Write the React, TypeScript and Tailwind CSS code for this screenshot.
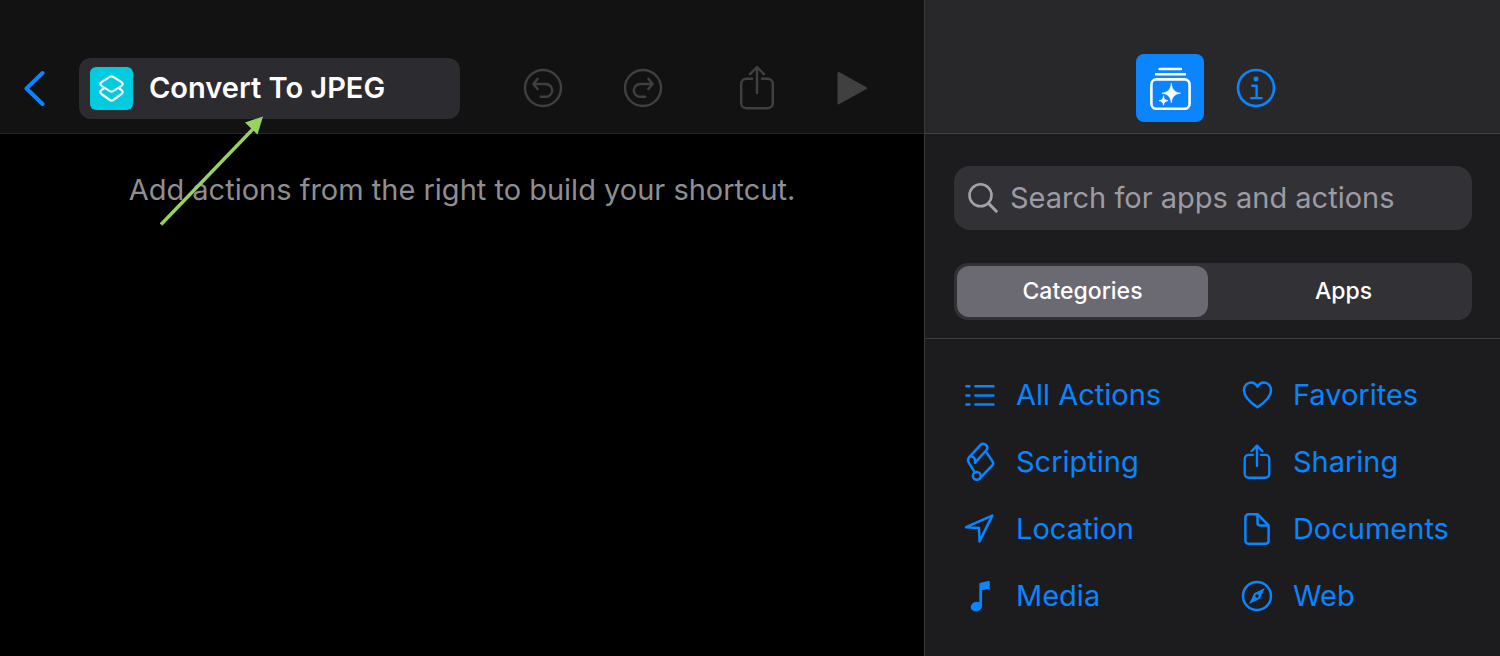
import { useState } from "react";
import type { ReactNode } from "react";

type IconProps = { className?: string; children: ReactNode };

const RowIcon = ({ children }: { children: ReactNode }) => (
  <svg
    viewBox="0 0 36 36"
    className="h-9 w-9 shrink-0 overflow-visible"
    fill="none"
    stroke="currentColor"
    strokeWidth="2.5"
    strokeLinecap="round"
    strokeLinejoin="round"
    aria-hidden="true"
  >
    {children}
  </svg>
);

const CircleIcon = ({ className, children }: IconProps) => (
  <svg
    viewBox="0 0 38 38"
    className={className}
    fill="none"
    stroke="currentColor"
    strokeWidth="2.4"
    strokeLinecap="round"
    strokeLinejoin="round"
    aria-hidden="true"
  >
    {children}
  </svg>
);

const ShareShape = () => (
  <>
    <path d="M13 13.8H7.2a5 5 0 0 0-5 5v19.4a5 5 0 0 0 5 5h21.6a5 5 0 0 0 5-5V18.8a5 5 0 0 0-5-5H23" />
    <path d="M18 28V2M11 9.2 18 2l7 7.2" />
  </>
);

const TurnArrow = () => (
  <>
    <circle cx="19" cy="19" r="18" />
    <path d="M13.6 9.8 9.3 15l4.3 5M9.3 15h12.5a6.4 6.4 0 0 1 0 12.8h-5" />
  </>
);

const categories: { label: string; icon: ReactNode }[] = [
  {
    label: "All Actions",
    icon: (
      <RowIcon>
        <path d="M4.4 9.3h3M4.4 18.4h3M4.4 27.5h3M13.4 9.3h18M13.4 18.4h18M13.4 27.5h18" />
      </RowIcon>
    ),
  },
  {
    label: "Favorites",
    icon: (
      <RowIcon>
        <path d="M18.5 30.3C12 26 5 20 5 13.2 5 8.600 8.200 5.400 12 5.400c3 0 5.200 1.600 6.500 4.200 1.300-2.600 3.500-4.200 6.500-4.200 3.800 0 7 3.200 7 7.800 0 6.800-7 12.800-13.500 17.100z" />
      </RowIcon>
    ),
  },
  {
    label: "Scripting",
    icon: (
      <RowIcon>
        <path d="M7.500 12.800 18.600.8a4 4 0 0 1 5.900 5.300L13 18.600" />
        <path d="M7.500 12.800c-1.800 2-1.800 4-.6 6l5.800 9.400M7.500 12.800c3.200-1.500 6.600 1.800 5.500 5.800" />
        <path d="m24.700 8.600 6 9.200c.8 1.300.7 2.400-.4 3.600L17.600 34.600" />
        <circle cx="14.800" cy="31.800" r="3.900" />
      </RowIcon>
    ),
  },
  {
    label: "Sharing",
    icon: (
      <svg
        viewBox="0 0 36 46"
        className="mx-1 h-9 w-7 shrink-0"
        fill="none"
        stroke="currentColor"
        strokeWidth="3"
        strokeLinecap="round"
        strokeLinejoin="round"
        aria-hidden="true"
      >
        <ShareShape />
      </svg>
    ),
  },
  {
    label: "Location",
    icon: (
      <RowIcon>
        <path d="M30.300 4.600 4 16.200l13 .8.600 13.400z" />
      </RowIcon>
    ),
  },
  {
    label: "Documents",
    icon: (
      <RowIcon>
        <path d="M18.500 3.200H9.600a3.200 3.200 0 0 0-3.200 3.200v23.200a3.200 3.200 0 0 0 3.200 3.200h16.800a3.200 3.200 0 0 0 3.200-3.200V14.400zM18.500 3.200v8.600c0 1.700.9 2.600 2.600 2.600h8.500" />
      </RowIcon>
    ),
  },
  {
    label: "Media",
    icon: (
      <RowIcon>
        <g fill="currentColor" stroke="none">
          <path d="M17.300 6.200c0-.8.400-1.300 1.200-1.500l8-1.700c.8-.2 1.300.2 1.300 1v5.400c0 .8-.4 1.300-1.200 1.500l-6.500 1.400v16h-2.800z" />
          <ellipse cx="14.400" cy="28.600" rx="5.700" ry="4.700" transform="rotate(-14 14.400 28.600)" />
        </g>
      </RowIcon>
    ),
  },
  {
    label: "Web",
    icon: (
      <RowIcon>
        <circle cx="18" cy="18" r="14" />
        <path
          d="M25.900 10.100 20.800 20.800 10.100 25.900 15.200 15.200zM18 16.300a1.700 1.700 0 1 0 0 3.400 1.700 1.700 0 0 0 0-3.400z"
          fill="currentColor"
          fillRule="evenodd"
          stroke="none"
        />
      </RowIcon>
    ),
  },
];

const tabs = ["Categories", "Apps"];

const EditorHeader = () => (
  <header className="flex h-[134px] items-center border-b border-[#272728] bg-[#121212] pl-6 pr-[57px] pt-[43px]">
    <button aria-label="Back" className="text-[#0a84ff]">
      <svg
        viewBox="0 0 22 36"
        className="h-9 w-[22px]"
        fill="none"
        stroke="currentColor"
        strokeWidth="4"
        strokeLinecap="round"
        strokeLinejoin="round"
      >
        <path d="M18.500 3 2.500 18.500 18.500 34" />
      </svg>
    </button>

    <button className="ml-[33px] flex h-[61px] min-w-0 flex-1 items-center gap-4 rounded-xl bg-[#2c2b2f] px-[11px] text-left">
      <span className="flex h-[43px] w-[43px] shrink-0 items-center justify-center rounded-md bg-[#00cbdf]">
        <svg
          viewBox="0 0 43 43"
          className="h-full w-full text-white"
          fill="none"
          stroke="currentColor"
          strokeWidth="2.200"
          strokeLinejoin="round"
          aria-hidden="true"
        >
          <path d="M19.800 9.900a3.200 3.200 0 0 1 3.400 0l8.300 5.200c1.600 1 1.600 2.800 0 3.800l-8.300 5.200a3.200 3.200 0 0 1-3.400 0l-8.300-5.200c-1.600-1-1.600-2.800 0-3.800z" />
          <path d="m14.400 20.900-2.900 2.300c-1.600 1.100-1.600 2.700 0 3.800l8.300 6a3 3 0 0 0 3.400 0l8.300-6c1.600-1.100 1.600-2.700 0-3.800l-2.900-2.300" />
        </svg>
      </span>
      <span className="truncate text-[29px] font-semibold text-white">Convert To JPEG</span>
    </button>

    <div className="ml-16 flex items-center gap-[62px] text-[#404041]">
      <button aria-label="Undo" disabled>
        <CircleIcon className="h-[38px] w-[38px] overflow-visible">
          <TurnArrow />
        </CircleIcon>
      </button>
      <button aria-label="Redo" disabled>
        <CircleIcon className="h-[38px] w-[38px] -scale-x-100 overflow-visible">
          <TurnArrow />
        </CircleIcon>
      </button>
    </div>
    <div className="ml-[77px] flex items-center gap-[62px] text-[#404041]">
      <button aria-label="Share" disabled>
        <svg
          viewBox="0 0 36 46"
          className="h-[46px] w-9"
          fill="none"
          stroke="currentColor"
          strokeWidth="2.400"
          strokeLinecap="round"
          strokeLinejoin="round"
        >
          <ShareShape />
        </svg>
      </button>
      <button aria-label="Run" disabled>
        <svg viewBox="0 0 30 34" className="h-[34px] w-[30px]" fill="currentColor" stroke="currentColor" strokeWidth="2" strokeLinejoin="round">
          <path d="M1.500 2v30.500L29 17.200z" />
        </svg>
      </button>
    </div>
  </header>
);

const PanelHeader = () => (
  <header className="flex h-[134px] items-center justify-center gap-[33px] border-b border-[#424245] bg-[#28282a] pr-3.5 pt-[43px]">
    <button aria-label="Action library" className="h-[68px] w-[68px] rounded-lg bg-[#0a84ff] text-white">
      <svg viewBox="0 0 68 68" className="h-full w-full" fill="none" stroke="currentColor" strokeWidth="2.600" strokeLinecap="round">
        <path d="M23.500 15h21.500M20 20.200h29" strokeWidth="2.400" />
        <rect x="15.400" y="25.400" width="38.200" height="29.400" rx="5" />
        <path
          d="M35.300 29.700c.9 6 2.900 8.400 9.300 9.500-6.400 1.100-8.400 3.500-9.300 9.500-.9-6-2.900-8.400-9.300-9.500 6.400-1.100 8.400-3.500 9.300-9.500zM27.500 42.100c.5 3 1.400 4 4.500 4.600-3.100.6-4 1.600-4.500 4.600-.5-3-1.400-4-4.500-4.600 3.100-.6 4-1.600 4.500-4.600z"
          fill="currentColor"
          stroke="currentColor"
          strokeWidth=".6"
        />
      </svg>
    </button>
    <button aria-label="Shortcut details" className="text-[#0a84ff]">
      <CircleIcon className="h-[38px] w-[38px] overflow-visible">
        <circle cx="19" cy="19" r="18" strokeWidth="2.600" />
        <circle cx="19" cy="10" r="2.500" fill="currentColor" stroke="none" />
        <path d="M15.300 16.800h4.300v12.300M14.300 29.100h10.400" />
      </CircleIcon>
    </button>
  </header>
);

const App = () => {
  const [activeTab, setActiveTab] = useState("Categories");
  const [query, setQuery] = useState("");

  return (
    <div className="grid min-h-screen grid-cols-[77fr_48fr] bg-black font-['Inter',sans-serif]">
      <main className="relative min-w-0">
        <EditorHeader />
        <p className="px-4 pt-9 text-center text-[29px] leading-10 text-[#8e8e93]">
          Add actions from the right to build your shortcut.
        </p>

        {/* pointer to the title */}
        <svg viewBox="0 0 104 110" className="pointer-events-none absolute left-40 top-29 h-[110px] w-[104px]" aria-hidden="true">
          <path d="M1 108.500 93 13" stroke="#96d35f" strokeWidth="3.400" />
          <path d="M103 .5 97.500 18.500 85 6.500z" fill="#96d35f" />
        </svg>
      </main>

      <aside className="min-w-0 border-l border-[#3a3a3d] bg-[#1c1c1e]">
        <PanelHeader />

        <div className="border-b border-[#3d3d40] pb-[18px] pl-[29px] pr-7 pt-8">
          <label className="flex h-16 items-center gap-3 rounded-2xl bg-[#323136] px-3.5">
            <svg viewBox="0 0 30 30" className="h-[30px] w-[30px] shrink-0 text-[#a3a1a9]" fill="none" stroke="currentColor" strokeWidth="2.600" strokeLinecap="round" aria-hidden="true">
              <circle cx="12.500" cy="12.300" r="11" />
              <path d="m20.600 20.400 7.700 7.800" strokeWidth="3" />
            </svg>
            <input
              type="text"
              aria-label="Search for apps and actions"
              placeholder="Search for apps and actions"
              value={query}
              onChange={(e) => setQuery(e.target.value)}
              className="min-w-0 flex-1 bg-transparent text-[29px] text-white outline-none placeholder:text-[#9d9ba3]"
            />
          </label>

          <div role="tablist" className="mt-[33px] grid h-[57px] grid-cols-2 gap-2.5 rounded-[14px] bg-[#323136] p-[3px]">
            {tabs.map((tab) => (
              <button
                key={tab}
                role="tab"
                aria-selected={tab === activeTab}
                onClick={() => setActiveTab(tab)}
                className={`rounded-xl text-[23px] font-medium text-white ${tab === activeTab ? "bg-[#6b6971]" : ""}`}
              >
                {tab}
              </button>
            ))}
          </div>
        </div>

        <nav className="grid grid-cols-[35fr_33fr] pl-[37px] pt-[22px]">
          {categories.map(({ label, icon }) => (
            <a key={label} href="#" className="flex h-[67px] items-center gap-[18px] text-[29px] text-[#0a84ff]">
              {icon}
              {label}
            </a>
          ))}
        </nav>
      </aside>
    </div>
  );
};

export default App;
